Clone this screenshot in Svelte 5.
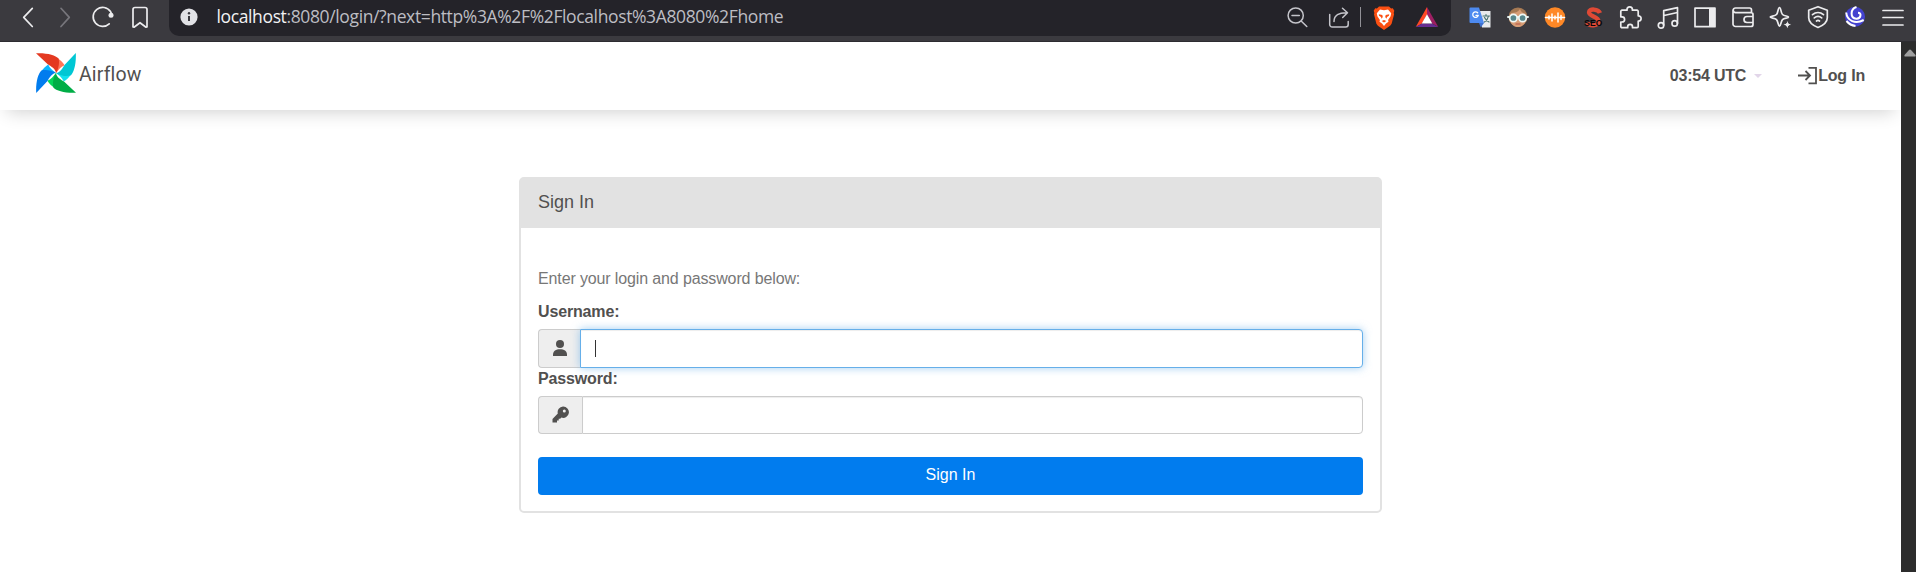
<script>
  const blades = [
    { angle: 0, dark: '#e43921', light: '#ff7557' },
    { angle: 90, dark: '#00c7d4', light: '#11e1ee' },
    { angle: 180, dark: '#00ad46', light: '#04d659' },
    { angle: 270, dark: '#017cee', light: '#0cb6ff' },
  ];
</script>

<div class="window">
  <header class="toolbar">
    <div class="group left">
      <svg class="ico" viewBox="0 0 24 24"><path d="M16.3 3.3 7.7 12.4l8.6 9.1" /></svg>
      <svg class="ico dim" viewBox="0 0 24 24"><path d="m8 3.3 8.3 9.1L8 21.5" /></svg>
      <svg class="ico" viewBox="0 0 24 24"><path d="M18.2 18.800A9.500 9.500 0 1 1 19.500 6.500l1.200 2.800" /><circle cx="20" cy="10.300" r="2.500" fill="#ececee" stroke="none" /></svg>
      <svg class="ico" viewBox="0 0 24 24"><path d="M5 22V4.500A2 2 0 0 1 7 2.500H17a2 2 0 0 1 2 2V22l-1 .2-6-4.500-6 4.500z" /></svg>
    </div>

    <div class="address">
      <svg class="info" viewBox="0 0 18 18"><circle cx="9" cy="9" r="8.600" fill="#e2e2e6" /><circle cx="9" cy="5.300" r="1.200" fill="#3b3a40" /><path d="M9 8v5" stroke="#3b3a40" stroke-width="2" /></svg>
      <span class="url"><b>localhost</b>:8080/login/?next=http%3A%2F%2Flocalhost%3A8080%2Fhome</span>
      <svg class="ico soft" viewBox="0 0 24 24"><circle cx="10.700" cy="10.500" r="7.600" /><path d="m16.400 16.200 5.400 5.300M7 10.500h7.300" /></svg>
      <svg class="ico soft share" viewBox="0 0 24 24"><path d="M2.700 9.500V19.500a2.500 2.500 0 0 0 2.500 2.500h13.500a2.500 2.500 0 0 0 2.500-2.500V16.500M7 16.500C7 10 12 7.500 20 7.700M15.500 3.200 20.500 7.700l-4.800 4.800" /></svg>
      <span class="divider"></span>
      <svg class="ico brave" viewBox="0 0 24 24" stroke="none">
        <path fill="#fb4f12" d="m7 1.400h10l2.100 2 1.700-.2 1.500 2.600-.6 2.200.4 1.300-2.500 9.500-1.500 2-6.100 4.200-6.100-4.200-1.500-2L2 9.300 2.400 8l-.7-2.200 1.500-2.600 1.700.2z" />
        <path fill="#fff" d="m8 4.500 4 .7 4-.7 3.200 3.800-.6 3-2.500 3.600.4 1.900-2.500 1.700-2 2.500-2-2.500-2.500-1.700.4-1.900-2.500-3.600-.6-3z" />
        <path fill="#fb4f12" d="m6.800 9.300 3.500.6.500 2-1.300 1.800-.5-1.600-2-1.400zM17.200 9.300l-3.500.6-.5 2 1.300 1.800.5-1.600 2-1.400zM9.700 16l2.300-.9 2.300.9-2.300 1.500z" />
      </svg>
      <svg class="ico bat" viewBox="0 0 24 24" stroke="none">
        <path fill="#ff4724" d="M12 2v7.500l-5 9L.7 22z" /><path fill="#9e1f63" d="M12 2v7.500l5.200 9L23.300 22z" /><path fill="#662d91" d="M.7 22 7 18.500h10l6.300 3.500z" /><path fill="#fff" d="m12 9.200 5.300 9.400H6.700z" />
      </svg>
    </div>

    <div class="group right">
      <svg class="ico" viewBox="0 0 24 24" stroke="none">
        <path fill="#e7eaed" d="M10 6h12.500v16.500H14z" /><path fill="#3e71ce" d="m11 18 5 0-3.200 4.500z" /><path fill="#4d8af0" d="M2.500 2.500H11L16 18H2.500a1 1 0 0 1-1-1V3.500a1 1 0 0 1 1-1z" />
        <path d="M9.700 7.800a2.800 2.800 0 1 0 .6 2.600H8" fill="none" stroke="#fff" stroke-width="1.300" /><path d="M15 11h6.500M18 9.500V11m2.500 0c-.5 3-2.500 5-4 6m0-4.500c1 2 2.500 3.500 4.500 4.500" fill="none" stroke="#4c7774" stroke-width="1.200" />
      </svg>
      <svg class="ico" viewBox="0 0 24 24" stroke="none">
        <circle cx="12" cy="12" r="9.500" fill="#a67953" /><path fill="#d69c75" d="M5 8c4 0 7-1 9-4 1 3 3 4 5.500 5v7c-1 4-4 6-7.500 6s-6.500-2-7.500-6z" />
        <path stroke="#e4f1ef" stroke-width="2" d="M2 12h20" /><g fill="#57868b" stroke="#eef7f5" stroke-width="1.700"><circle cx="7.400" cy="13" r="3.700" /><circle cx="16.600" cy="13" r="3.700" /></g><path stroke="#b34e43" stroke-width="1.200" d="M10 19h4" />
      </svg>
      <svg class="ico" viewBox="0 0 24 24"><circle cx="12" cy="12.500" r="10.200" fill="#ff8826" stroke="none" /><path stroke="#fff" stroke-width="1.500" d="M2.500 12.500h19M6 11v3M9 9v7M12 11v3M15 8v9M18 10.500v4" /></svg>
      <svg class="ico seo" viewBox="0 0 24 24" stroke="none"><path fill="none" stroke="#df4935" stroke-width="4.300" stroke-linecap="butt" d="M19 8C17.500 3.800 8 3.200 8 7.200c0 4.500 9.500 4 9.500 9 0 5-9 5.500-11.500 1.500" /><text x="12.300" y="20.800" text-anchor="middle">SEO</text></svg>
      <svg class="ico" viewBox="0 0 24 24"><path d="M4 5.200h5V4.500a2.700 2.700 0 0 1 5.400 0v.7H19a1.200 1.200 0 0 1 1.200 1.200v4.400h.3a2.600 2.600 0 0 1 0 5.200h-.3v5.500A1.200 1.200 0 0 1 19 22.700H14.500v-1a2.400 2.400 0 0 0-4.800 0v1H4a1.200 1.200 0 0 1-1.200-1.200V17H4a2.600 2.600 0 0 0 0-5.200H2.800V6.400A1.200 1.200 0 0 1 4 5.200z" /></svg>
      <svg class="ico" viewBox="0 0 24 24"><circle cx="5" cy="20.400" r="2.700" /><circle cx="18.700" cy="18.400" r="2.700" /><path d="M7.700 20V5.700L21.500 2.700v15.500M8 10.500l13.500-3" /></svg>
      <svg class="ico" viewBox="0 0 24 24"><path d="M2 3.200h20v18.500H2z" /><path fill="#ececee" stroke="none" d="M16 3h6v19h-6z" /></svg>
      <svg class="ico" viewBox="0 0 24 24"><path d="M20.500 7.500V5a2 2 0 0 0-2-2h-14a2.300 2.300 0 0 0 0 4.600H20a2 2 0 0 1 2 2V19.500a2 2 0 0 1-2 2H4.500a2.500 2.500 0 0 1-2.500-2.500V5M22 11.500h-6a3 3 0 0 0 0 6h6" /></svg>
      <svg class="ico" viewBox="0 0 24 24"><path d="M11.500 2.500c1.500 0 1.200 5.200 3 7s6 1.300 6 2.600-4.300.8-6 2.500-1.500 6.500-3 6.500-1.300-4.800-3-6.500-6.300-1.300-6.300-2.500 4.600-.8 6.300-2.600 1.500-7 3-7z" /><path fill="#ececee" stroke="#3b3a3f" stroke-width="1" d="m19.300 15 1.400 3.200 3.300 1.400-3.300 1.400-1.400 3.300-1.400-3.300-3.300-1.400 3.300-1.400z" /></svg>
      <svg class="ico" viewBox="0 0 24 24"><path d="m12 1.700 9.300 3.500v7.500c0 4.500-4.500 7.800-9.300 9.800-4.800-2-9.300-5.300-9.300-9.800V5.200zM6.500 9.700c3.300-2.700 7.700-2.700 11 0M8.300 12.900c2.200-1.800 5.200-1.800 7.400 0M10.500 16c1-.7 2-.7 3 0" /></svg>
      <svg class="ico" viewBox="0 0 24 24"><circle cx="12" cy="11.700" r="10" fill="#4442cf" stroke="none" /><path stroke="#fff" stroke-width="2" stroke-linecap="butt" d="M13.500 2C7 4 7 13.500 13.300 13.700c4.700.2 5.700-6 1.700-6M3.200 7.500c.8 8.500 9.300 12 17.500 7.500M3.500 16c2.500 3 5 4.500 9 5" /></svg>
      <svg class="ico" viewBox="0 0 24 24"><path d="M2 5.500h20M2 12.500h20M2 20h20" /></svg>
    </div>
  </header>

  <div class="viewport">
    <div class="page">
      <nav>
        <a class="brand" href="#home">
          <svg class="pinwheel" viewBox="0 0 40 40">
            {#each blades as blade}
              <g transform="rotate({blade.angle} 20 20)">
                <path fill={blade.light} d="M20.200 20 22 5.500c2.800 1.800 4.800 4 6.600 6.700-3.500 1.500-6 4-8.400 7.800z" />
                <path fill={blade.dark} d="M0 .2C11-.3 19.500 2 22.600 5.500c1 4.500.2 9.500-2.400 14.500C19 15.500 15.500 13.500 12 11.500z" />
              </g>
            {/each}
          </svg>
          <span>Airflow</span>
        </a>
        <div class="menu">
          <span class="clock">03:54 UTC</span><span class="caret"></span>
          <a class="login" href="#login"><svg viewBox="0 0 20 20"><path d="M1 9.500h12M8.500 5l4.500 4.500L8.500 14M11.500 1.800H19v15.500h-7.500" /></svg>Log In</a>
        </div>
      </nav>

      <main>
        <section class="panel">
          <h1>Sign In</h1>
          <form>
            <p>Enter your login and password below:</p>
            <label for="username">Username:</label>
            <div class="field active">
              <span class="addon"><svg viewBox="0 0 16 16"><circle cx="8" cy="4" r="4" /><path d="M1 16v-1.200C1 11 4 9.300 8 9.300s7 1.700 7 5.500V16z" /></svg></span>
              <div class="input" id="username"><i class="cursor"></i></div>
            </div>
            <label for="password">Password:</label>
            <div class="field">
              <span class="addon"><svg class="key" viewBox="0 0 17 17"><path fill-rule="evenodd" d="M11 .5a5.700 5.700 0 1 1-1.600 11.100L8.200 12.800H6.700v1.700H5V16.500H.5V13l5.300-5.400A5.700 5.700 0 0 1 11 .5zm1.300 2.900a1.500 1.500 0 1 0 0 3 1.500 1.500 0 0 0 0-3z" /></svg></span>
              <div class="input" id="password"></div>
            </div>
            <button type="button">Sign In</button>
          </form>
        </section>
      </main>
    </div>
    <aside class="scrollbar"><svg viewBox="0 0 12 8"><path d="M1 7.500Q0 7.500.5 6L5 1Q6 0 7 1l4.500 5q.5 1.500-.5 1.500z" /></svg></aside>
  </div>
</div>

<style>
  :global(body) { background: #fff; overflow: hidden; }
  * { box-sizing: border-box; }
  .window { width: 1916px; height: 572px; display: flex; flex-direction: column; font-family: "Liberation Sans", Arial, sans-serif; font-size: 16px; color: #51504f; }
  .toolbar { height: 42px; flex: none; display: flex; background: #3b3a3f; border-bottom: 1px solid #2d2c31; }
  .group { display: flex; height: 33px; align-items: center; }
  .ico { width: 24px; height: 24px; margin: 0 6.750px; flex: none; overflow: visible; fill: none; stroke: #ececee; stroke-width: 1.700; stroke-linecap: round; stroke-linejoin: round; }
  .ico[stroke="none"] { stroke: none; }
  .left { width: 169px; padding-left: 8.800px; }
  .right { padding-left: 10.500px; }
  .group .dim { stroke: #77767c; }
  .address .soft { stroke: #c4c4ca; stroke-width: 1.500; }
  .address { width: 1282px; height: 36px; padding: 0 12px 3px 11px; display: flex; align-items: center; background: #242329; border-radius: 0 0 10px 10px; }
  .address .ico { margin: 0; }
  .info { width: 18px; height: 18px; margin-right: 18.500px; }
  .url { flex: 1; font-family: "Open Sans", "Noto Sans", sans-serif; font-size: 17.500px; line-height: 24px; letter-spacing: -.37px; padding-bottom: 2px; color: #bdbdc3; white-space: nowrap; }
  .url b { font-weight: 400; color: #f2f2f4; }
  .address .share { margin-left: 18px; }
  .divider { width: 1px; height: 20px; margin: 0 11px 0 9px; background: #929197; }
  .address .bat { margin-left: 19px; }
  .seo text { font: 700 8.500px "Liberation Sans", sans-serif; fill: #08080a; }
  .viewport { flex: 1; display: flex; min-height: 0; }
  .page { width: 1901px; overflow: hidden; }
  .scrollbar { width: 15px; padding: 6px 0 0 3px; background: #2c2c2c; }
  .scrollbar svg { display: block; width: 12px; height: 10px; fill: #9f9f9f; }
  nav { height: 68px; padding: 0 36px; display: flex; justify-content: space-between; box-shadow: 0 9px 18px -7px rgba(0, 0, 0, .19); }
  a { color: inherit; text-decoration: none; }
  .brand { display: flex; align-items: flex-start; padding-top: 11px; }
  .pinwheel { width: 40px; height: 40px; }
  .brand span { margin: 10px 0 0 3px; font: 19.500px/24px Roboto, sans-serif; letter-spacing: .15px; }
  .menu { display: flex; align-items: center; font-weight: 700; padding-bottom: 1px; }
  .clock { letter-spacing: -.2px; }
  .caret { margin: 0 35px 0 8px; border: 4px solid transparent; border-top-color: #e2d6e9; border-bottom: 0; }
  .login { display: flex; align-items: center; letter-spacing: -.2px; }
  .login svg { width: 20px; height: 20px; margin-right: 1px; fill: none; stroke: #51504f; stroke-width: 1.800; }
  main { padding: 67px 0 0 519px; }
  .panel { width: 863px; height: 336px; border: 2px solid #e2e2e2; border-radius: 5px; }
  h1 { margin: 0; height: 49px; padding: 12px 17px; background: #e2e2e2; font-size: 18px; line-height: 22px; font-weight: 400; }
  form { padding: 40px 17px 0; display: flex; flex-direction: column; }
  p { margin: 0; line-height: 22px; letter-spacing: -.13px; color: #777; }
  label { margin-top: 11px; height: 28px; line-height: 22px; font-weight: 700; letter-spacing: -.15px; }
  .field { height: 38px; display: flex; }
  .field.active { height: 39px; }
  .field + label { margin-top: 0; }
  .addon { width: 44px; display: flex; padding: 10px 0 0 13px; background: #eee; border: 1px solid #ccc; border-right: 0; border-radius: 4px 0 0 4px; }
  .active .addon { width: 42px; }
  .addon svg { width: 16px; height: 16px; flex: none; fill: #51504f; }
  .addon .key { width: 17px; height: 17px; margin: -1px 0 0; }
  .input { flex: 1; padding: 10px 14px; border: 1px solid #ccc; border-radius: 0 4px 4px 0; background: #fff; box-shadow: inset 0 1px 1px rgba(0, 0, 0, .075); }
  .active .input { border-color: #66afe9; box-shadow: inset 0 1px 1px rgba(0, 0, 0, .075), 0 0 9px rgba(102, 175, 233, .6); }
  .cursor { display: block; width: 1px; height: 17px; background: #333; }
  button { height: 38px; margin-top: 23px; padding: 0 0 2px; border: 0; border-radius: 4px; background: #017cee; color: #fff; font: inherit; }
</style>
